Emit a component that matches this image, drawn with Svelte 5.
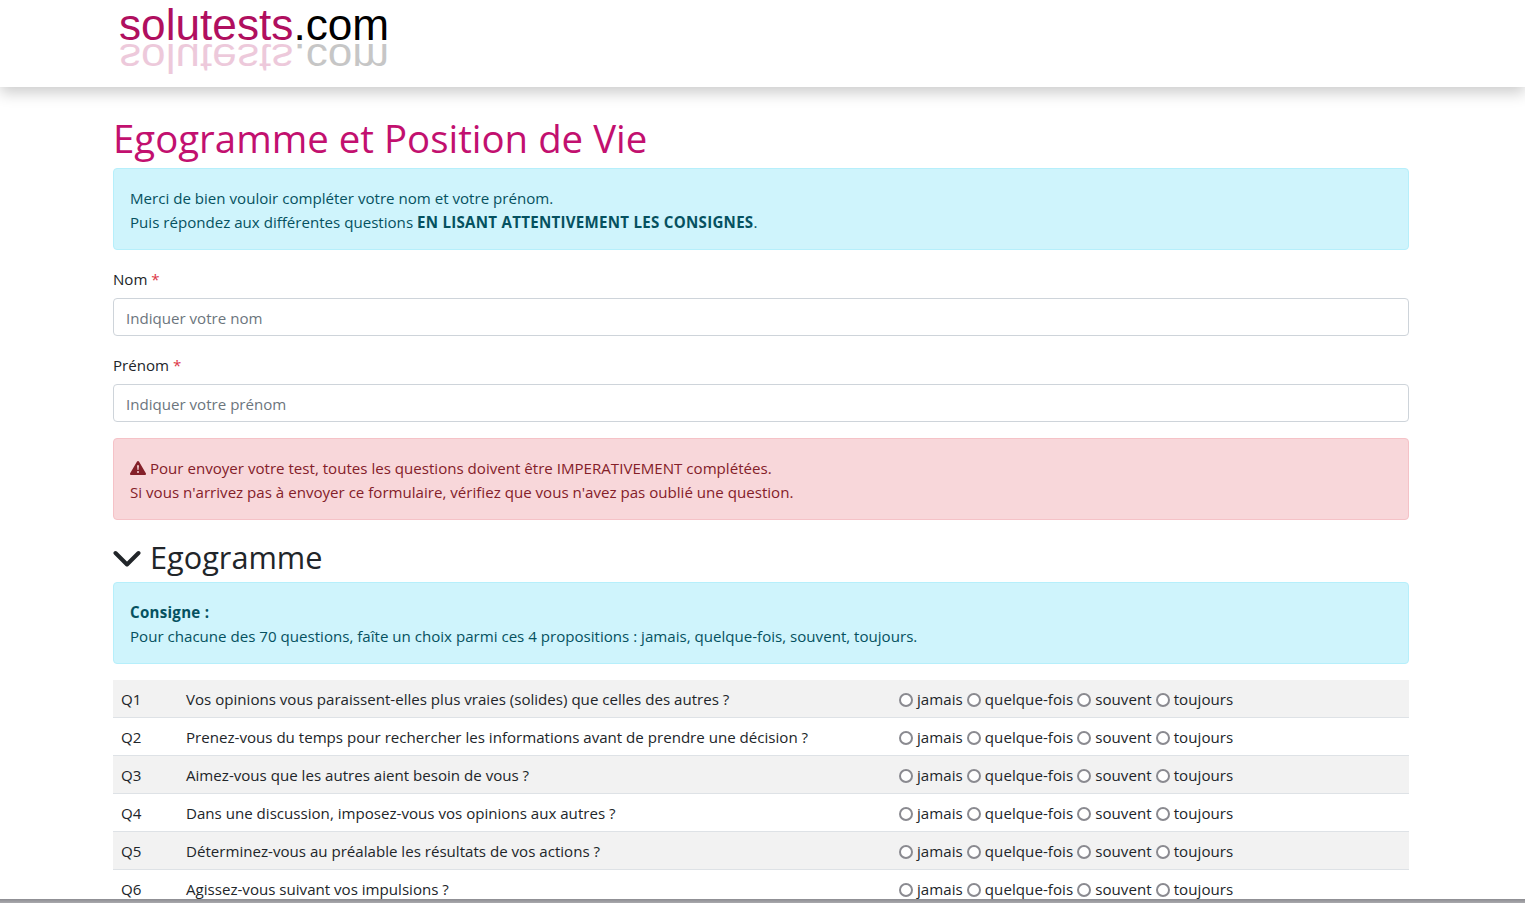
<script>
  const questions = [
    'Vos opinions vous paraissent-elles plus vraies (solides) que celles des autres ?',
    'Prenez-vous du temps pour rechercher les informations avant de prendre une décision ?',
    'Aimez-vous que les autres aient besoin de vous ?',
    'Dans une discussion, imposez-vous vos opinions aux autres ?',
    'Déterminez-vous au préalable les résultats de vos actions ?',
    'Agissez-vous suivant vos impulsions ?'
  ];
  const choices = ['jamais', 'quelque-fois', 'souvent', 'toujours'];
</script>

<header class="site-header">
  <div class="logo">
    <div class="logo-text"><span class="pink">solutests</span>.com</div>
    <div class="logo-text mirror" aria-hidden="true"><span class="pink">solutests</span>.com</div>
  </div>
</header>

<main class="container">
  <h1>Egogramme et Position de Vie</h1>

  <div class="alert info">
    Merci de bien vouloir compléter votre nom et votre prénom.<br />
    Puis répondez aux différentes questions <b>EN LISANT ATTENTIVEMENT LES CONSIGNES</b>.
  </div>

  <div class="field">
    <label for="nom">Nom <span class="req">*</span></label>
    <input id="nom" type="text" placeholder="Indiquer votre nom" />
  </div>
  <div class="field">
    <label for="prenom">Prénom <span class="req">*</span></label>
    <input id="prenom" type="text" placeholder="Indiquer votre prénom" />
  </div>

  <div class="alert danger">
    <svg class="warn" viewBox="0 0 16 16" width="16" height="16" aria-hidden="true">
      <path fill="currentColor" d="M8.98 1.56a1.13 1.13 0 0 0-1.96 0L.16 13.22c-.46.78.1 1.78.98 1.78h13.72c.88 0 1.44-1 .98-1.78L8.98 1.56zM8 5c.54 0 .96.46.9 1l-.35 3.5a.55.55 0 0 1-1.1 0L7.1 6c-.06-.54.36-1 .9-1zm0 6a1 1 0 1 1 0 2 1 1 0 0 1 0-2z" />
    </svg>
    Pour envoyer votre test, toutes les questions doivent être IMPERATIVEMENT complétées.<br />
    Si vous n'arrivez pas à envoyer ce formulaire, vérifiez que vous n'avez pas oublié une question.
  </div>

  <h2>
    <svg class="chevron" viewBox="0 0 28 18" width="28" height="18" aria-hidden="true">
      <path d="M2.5 3 14 14.5 25.5 3" fill="none" stroke="currentColor" stroke-width="4" stroke-linecap="round" stroke-linejoin="round" />
    </svg>
    Egogramme
  </h2>

  <div class="alert info">
    <b>Consigne :</b><br />
    Pour chacune des 70 questions, faîte un choix parmi ces 4 propositions : jamais, quelque-fois, souvent, toujours.
  </div>

  <table>
    <colgroup>
      <col class="c-num" />
      <col class="c-text" />
      <col />
    </colgroup>
    <tbody>
      {#each questions as q, i}
        <tr>
          <td>Q{i + 1}</td>
          <td>{q}</td>
          <td>
            {#each choices as c}
              <label class="choice"><input type="radio" name="q{i}" value={c} /> {c}</label>
            {/each}
          </td>
        </tr>
      {/each}
    </tbody>
  </table>
</main>

<div class="bottom-edge"></div>

<style>
  :global(html), :global(body) {
    height: 903px;
    overflow: hidden;
  }

  :global(body) {
    margin: 0;
    background: #fff;
    color: #212529;
    font-family: "Open Sans", "Noto Sans", sans-serif;
    font-size: 15.1px;
    line-height: 24px;
  }

  .site-header {
    height: 87px;
    background: #fff;
    box-shadow: 0 6px 14px rgba(0, 0, 0, 0.2);
    padding-left: 119px;
    position: relative;
    clip-path: inset(0 0 -30px 0);
  }

  .logo {
    position: relative;
    width: 280px;
    height: 80px;
  }

  .logo-text {
    font-family: "Liberation Sans", Arial, sans-serif;
    font-size: 44.2px;
    line-height: 42px;
    padding-top: 4px;
    color: #000;
  }

  .pink { color: #b00f5f; }

  /* reflet : retourne autour de la ligne de base */
  .mirror {
    position: absolute;
    left: 0;
    top: 8px;
    padding-top: 0;
    transform-origin: 0 36px;
    transform: scaleY(-0.9);
    opacity: 0.22;
  }

  .container {
    width: 1296px;
    margin-left: 113px;
  }

  h1 {
    margin: 0 0 6px;
    padding-top: 27px;
    font-size: 38.4px;
    line-height: 48px;
    font-weight: 400;
    color: #c2106f;
  }

  h2 {
    display: flex;
    align-items: center;
    gap: 9px;
    margin: 0 0 8px;
    height: 38px;
    box-sizing: border-box;
    padding-top: 4px;
    font-size: 30.7px;
    line-height: 38px;
    font-weight: 400;
  }

  .chevron {
    color: #212529;
    margin-top: 4px;
  }

  .alert {
    padding: 17px 16px 15px;
    margin-bottom: 16px;
    border: 1px solid transparent;
    border-radius: 4px;
  }

  .alert b { letter-spacing: 0.27px; }

  .info {
    background: #cff4fc;
    border-color: #b6effb;
    color: #055160;
  }

  .danger {
    background: #f8d7da;
    border-color: #f5c2c7;
    color: #842029;
  }

  .warn { vertical-align: -2px; }

  .field { margin-bottom: 16px; }

  .field label {
    display: block;
    margin-bottom: 6px;
    height: 26px;
    padding-top: 1px;
    box-sizing: border-box;
  }

  .req { color: #dc3545; }

  .field input {
    display: block;
    width: 100%;
    box-sizing: border-box;
    height: 38px;
    padding: 7px 12px 5px;
    border: 1px solid #ced4da;
    border-radius: 4px;
    font: inherit;
    color: #212529;
    background: #fff;
  }

  .field input::placeholder { color: #6c757d; opacity: 1; }

  table {
    width: 100%;
    table-layout: fixed;
    border-collapse: separate;
    border-spacing: 0;
  }

  .c-num { width: 65px; }
  .c-text { width: 713px; }

  td {
    height: 38px;
    box-sizing: border-box;
    padding: 6px 8px;
    border-bottom: 1px solid #dee2e6;
  }

  tr:nth-child(odd) td { background: #f2f2f2; }

  .choice {
    margin-right: 4px;
    letter-spacing: 0.05px;
  }

  .choice input {
    appearance: none;
    width: 14px;
    height: 14px;
    margin: 0;
    border: 2px solid #8a8a90;
    border-radius: 50%;
    box-sizing: border-box;
    vertical-align: -2px;
    background: #fff;
  }

  .bottom-edge {
    position: fixed;
    left: 0;
    right: 0;
    bottom: 0;
    height: 4px;
    background: linear-gradient(#8d8d92, #a9a9ad);
  }
</style>
